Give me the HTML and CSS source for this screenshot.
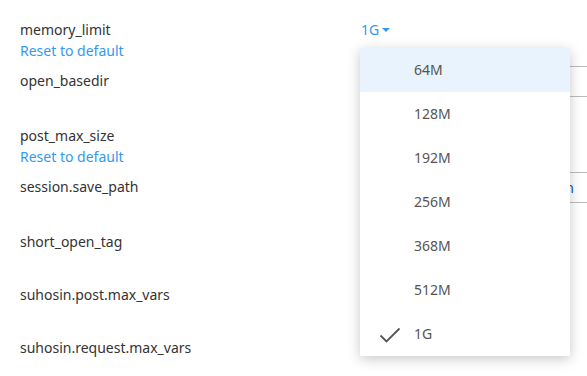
FILE: index.html
```html
<!DOCTYPE html>
<html lang="en">
<head>
  <meta charset="UTF-8" />
  <title>PHP Settings</title>
  <link rel="stylesheet" href="styles.css">
</head>
<body>

<div id="settings">
  <div class="row">
    <div class="label">
      <div class="name">memory_limit</div>
      <a class="reset" href="#">Reset to default</a>
    </div>
    <div class="value">
      <span class="select">
        <span class="select-val">1G</span><span class="caret"></span>
        <ul class="menu">
          <li class="hover">64M</li>
          <li>128M</li>
          <li>192M</li>
          <li>256M</li>
          <li>368M</li>
          <li>512M</li>
          <li class="checked">
            <svg class="check" width="22" height="16" viewBox="0 0 22 16"><path d="M1.5 8.5 L7.5 14.5 L20.5 1.5" fill="none" stroke="#555" stroke-width="1.8"/></svg>
            1G
          </li>
        </ul>
      </span>
    </div>
  </div>

  <div class="row tall">
    <div class="label"><div class="name">open_basedir</div></div>
    <div class="value"><div class="box"></div></div>
  </div>

  <div class="row">
    <div class="label">
      <div class="name">post_max_size</div>
      <a class="reset" href="#">Reset to default</a>
    </div>
    <div class="value"></div>
  </div>

  <div class="row tall">
    <div class="label"><div class="name">session.save_path</div></div>
    <div class="value"><div class="box"><a class="box-link" href="#">Edit session</a></div></div>
  </div>

  <div class="row mid">
    <div class="label"><div class="name">short_open_tag</div></div>
    <div class="value"></div>
  </div>

  <div class="row mid">
    <div class="label"><div class="name">suhosin.post.max_vars</div></div>
    <div class="value"></div>
  </div>

  <div class="row mid">
    <div class="label"><div class="name">suhosin.request.max_vars</div></div>
    <div class="value"></div>
  </div>
</div>

</body>
</html>
```

FILE: styles.css
```css
body {
  font-family: "Noto Sans", sans-serif;
  font-size: 14px;
  color: #333;
  margin: 0;
  padding: 15px 0 0 20px;
  overflow: hidden;
}

#settings {
  width: 567px;
}

.row {
  display: flex;
  min-height: 51px;
}

.row.tall {
  min-height: 55px;
}

.row.mid {
  min-height: 53px;
}

.label {
  width: 340px;
  padding: 5px 0;
  flex-shrink: 0;
}

.name {
  line-height: 20px;
}

.reset {
  display: block;
  line-height: 21px;
  color: #3399ee;
  text-decoration: none;
}

.value {
  flex-grow: 1;
  min-width: 0;
  padding-left: 1px;
}

.box {
  height: 29px;
  border-top: 1px solid #bbb;
  border-bottom: 1px solid #bbb;
  line-height: 29px;
  text-align: right;
  padding-right: 13px;
  color: #333;
  overflow: hidden;
  white-space: nowrap;
}

.box-link {
  color: #1a4fc4;
  text-decoration: none;
}

.select {
  position: relative;
  display: inline-block;
  padding-top: 5px;
  line-height: 20px;
  color: #3399ee;
}

.caret {
  display: inline-block;
  width: 0;
  height: 0;
  margin-left: 3px;
  vertical-align: 3px;
  border-left: 4px solid transparent;
  border-right: 4px solid transparent;
  border-top: 4px solid #3399ee;
}

.menu {
  position: absolute;
  top: 33px;
  left: -1px;
  width: 210px;
  margin: 0;
  padding: 0;
  list-style: none;
  background: #fff;
  box-shadow: 0 3px 12px rgba(0, 0, 0, 0.22);
  z-index: 10;
}

.menu li {
  position: relative;
  height: 44px;
  line-height: 44px;
  padding-left: 54px;
  color: #555;
}

.menu li.hover {
  background: #e8f3fd;
}

.check {
  position: absolute;
  left: 19px;
  top: 15px;
}
```
